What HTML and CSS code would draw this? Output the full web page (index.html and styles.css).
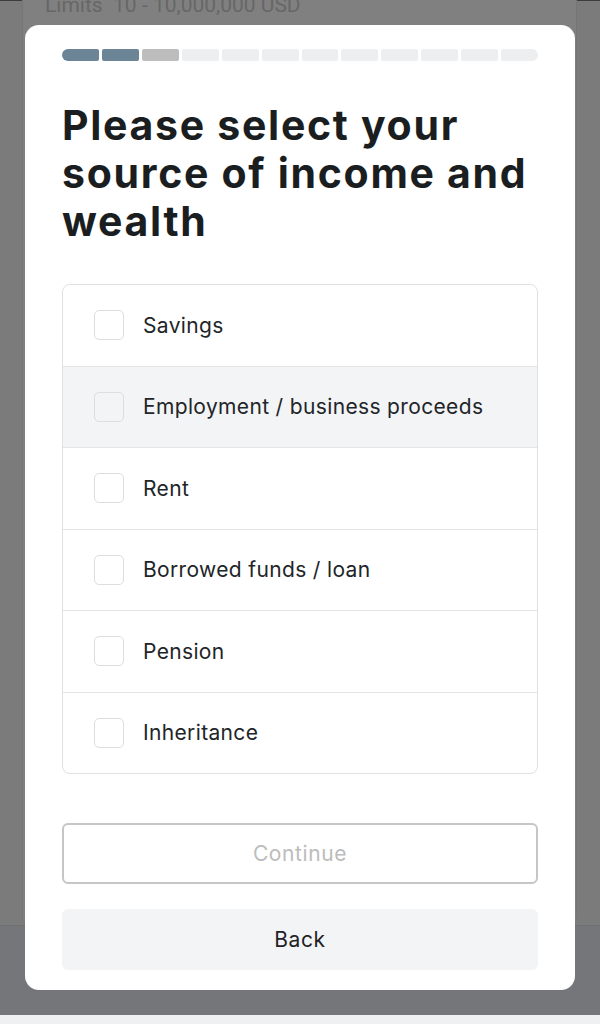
FILE: index.html
```html
<!DOCTYPE html>
<html lang="en">
<head>
<meta charset="utf-8">
<title>Source of income</title>
<link rel="stylesheet" href="styles.css">
</head>
<body>
<div class="page">
  <div class="under">
    <div class="under-card">
      <div class="limits">Limits&nbsp;&nbsp;10 - 10,000,000 USD</div>
    </div>
  </div>
  <div class="under-foot"></div>
  <div class="under-strip"></div>
</div>

<div class="modal">
  <div class="progress">
    <span class="seg done"></span>
    <span class="seg done"></span>
    <span class="seg current"></span>
    <span class="seg"></span>
    <span class="seg"></span>
    <span class="seg"></span>
    <span class="seg"></span>
    <span class="seg"></span>
    <span class="seg"></span>
    <span class="seg"></span>
    <span class="seg"></span>
    <span class="seg"></span>
  </div>

  <h1 class="title">Please select your source of income and wealth</h1>

  <ul class="options">
    <li class="option"><span class="box"></span><span class="label">Savings</span></li>
    <li class="option hover"><span class="box"></span><span class="label">Employment / business proceeds</span></li>
    <li class="option"><span class="box"></span><span class="label">Rent</span></li>
    <li class="option"><span class="box"></span><span class="label">Borrowed funds / loan</span></li>
    <li class="option"><span class="box"></span><span class="label">Pension</span></li>
    <li class="option"><span class="box"></span><span class="label">Inheritance</span></li>
  </ul>

  <button class="btn btn-continue" type="button" disabled>Continue</button>
  <button class="btn btn-back" type="button">Back</button>
</div>
</body>
</html>
```

FILE: styles.css
```css
* { box-sizing: border-box; }

html, body {
  margin: 0;
  padding: 0;
}

body {
  width: 600px;
  height: 1024px;
  overflow: hidden;
  background: #7b7b7b;
  font-family: Inter, "Noto Sans", sans-serif;
  position: relative;
}

.page {
  display: flex;
  flex-direction: column;
  height: 1024px;
  border-top: 1px solid #3c3c3c;
}

.under {
  height: 924px;
  padding: 0 23px 0 22px;
}

.under-card {
  height: 100%;
  background: #808080;
  border-left: 1px solid #767676;
  border-right: 1px solid #767676;
  padding-left: 22px;
}

.limits {
  font-family: Roboto, "Liberation Sans", sans-serif;
  font-size: 21px;
  color: #676767;
  line-height: 20px;
  margin-top: -6px;
}

.under-foot {
  height: 90px;
  background: #747679;
  border-top: 1px solid #6e6f71;
}

.under-strip {
  flex: 1;
  background: #eef0f2;
}

.modal {
  position: absolute;
  left: 25px;
  top: 25px;
  width: 550px;
  height: 965px;
  background: #ffffff;
  border-radius: 14px;
  padding: 24px 37px 20px 37px;
  display: flex;
  flex-direction: column;
}

.progress {
  display: flex;
  gap: 3px;
  height: 12px;
  border-radius: 6px;
  overflow: hidden;
}

.seg {
  flex: 1;
  background: #eceef0;
  border-radius: 2px;
}

.seg.done { background: #6b8597; }
.seg.current { background: #bdbdbd; }

.title {
  margin: 40px 0 39px 0;
  font-family: Inter, "DejaVu Sans", sans-serif;
  font-weight: 700;
  font-size: 41px;
  line-height: 48px;
  letter-spacing: 1.7px;
  color: #1b1e21;
}

.options {
  list-style: none;
  margin: 0;
  padding: 0;
  border: 1px solid #dfe1e3;
  border-radius: 8px;
  overflow: hidden;
}

.option {
  height: 81.5px;
  display: flex;
  align-items: center;
  padding-left: 31px;
  gap: 19px;
  border-top: 1px solid #e3e4e6;
}

.option:first-child {
  border-top: none;
  height: 80.5px;
}

.option.hover {
  background: #f3f4f6;
}

.box {
  width: 30px;
  height: 30px;
  border: 1.5px solid #dcdddf;
  border-radius: 5px;
  flex: none;
}

.label {
  font-size: 21px;
  color: #222528;
  letter-spacing: 0.35px;
}

.btn {
  display: block;
  width: 100%;
  height: 61px;
  font-family: Inter, "Noto Sans", sans-serif;
  font-size: 21px;
  letter-spacing: 0.6px;
  border-radius: 6px;
  padding: 0;
}

.btn-continue {
  margin-top: 49px;
  background: #ffffff;
  border: 2px solid #c6c6c6;
  color: #bcbcbc;
}

.btn-back {
  margin-top: 25px;
  background: #f3f4f6;
  border: none;
  color: #1f2225;
}
```
